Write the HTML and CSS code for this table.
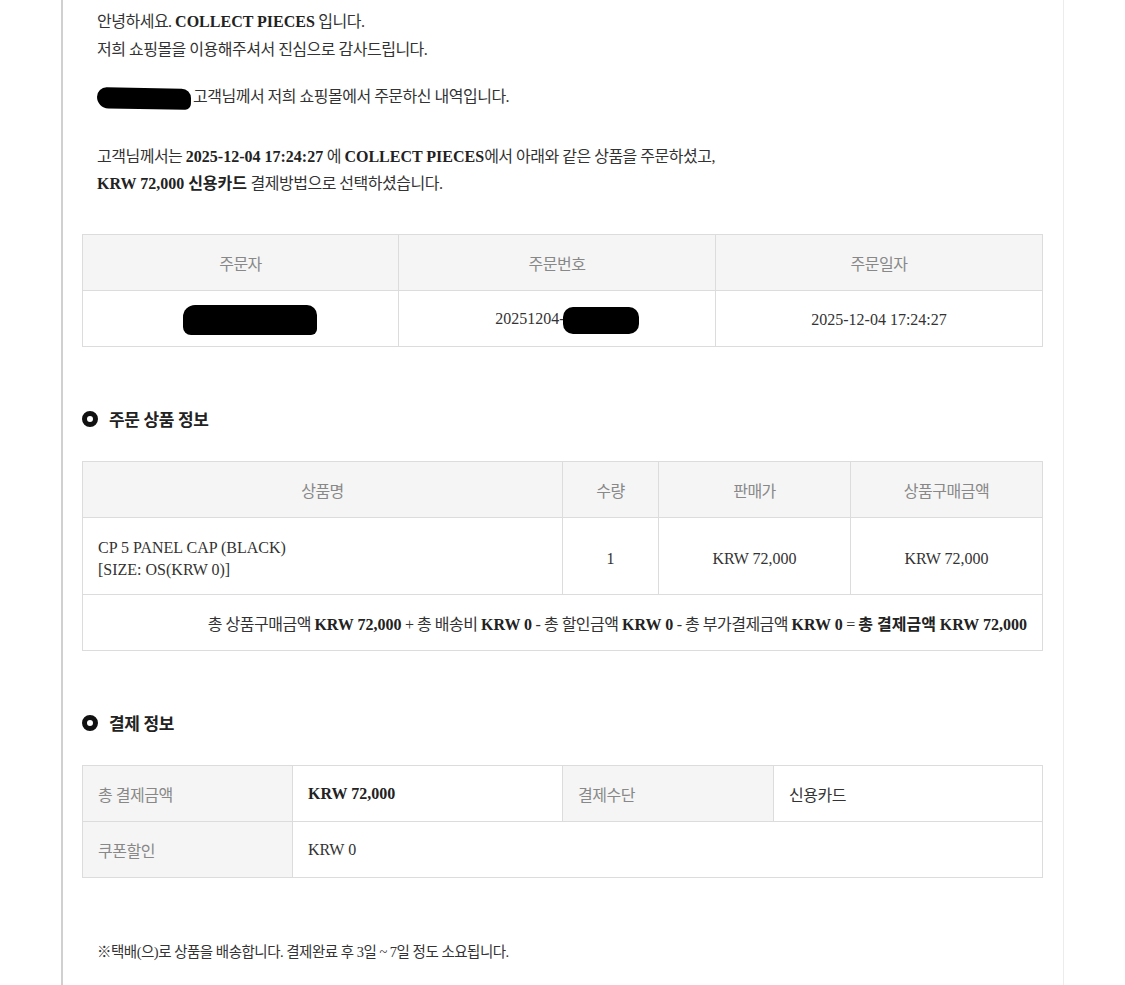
FILE: index.html
```html
<!DOCTYPE html>
<html lang="ko">
<head>
    <meta charset="UTF-8">
    <meta name="viewport" content="width=device-width, initial-scale=1.0">
    <title>주문 내역</title>
    <link rel="stylesheet" href="styles.css">
</head>
<body>
    <div class="mail">
        <div class="intro">
            <p>안녕하세요. <b>COLLECT PIECES</b> 입니다.<br>저희 쇼핑몰을 이용해주셔서 진심으로 감사드립니다.</p>
            <p class="name-line"><span class="blot blot-name"></span>고객님께서 저희 쇼핑몰에서 주문하신 내역입니다.</p>
            <p class="order-line">고객님께서는 <b>2025-12-04 17:24:27</b> 에 <b>COLLECT PIECES</b>에서 아래와 같은 상품을 주문하셨고,<br><b>KRW 72,000 신용카드</b> 결제방법으로 선택하셨습니다.</p>
        </div>

        <table class="grid summary">
            <tr>
                <th class="c1">주문자</th>
                <th class="c2">주문번호</th>
                <th>주문일자</th>
            </tr>
            <tr class="body-row">
                <td><span class="blot blot-buyer"></span></td>
                <td class="order-no">20251204-<span class="blot blot-num"></span></td>
                <td>2025-12-04 17:24:27</td>
            </tr>
        </table>

        <h3 class="section-title"><span class="ring"></span>주문 상품 정보</h3>

        <table class="grid items">
            <tr>
                <th class="i1">상품명</th>
                <th class="i2">수량</th>
                <th class="i3">판매가</th>
                <th>상품구매금액</th>
            </tr>
            <tr class="product-row">
                <td class="product">CP 5 PANEL CAP (BLACK)<br>[SIZE: OS(KRW 0)]</td>
                <td>1</td>
                <td>KRW 72,000</td>
                <td>KRW 72,000</td>
            </tr>
            <tr>
                <td colspan="4" class="total">총 상품구매금액 <b>KRW 72,000</b> + 총 배송비 <b>KRW 0</b> - 총 할인금액 <b>KRW 0</b> - 총 부가결제금액 <b>KRW 0</b> = <b>총 결제금액 KRW 72,000</b></td>
            </tr>
        </table>

        <h3 class="section-title"><span class="ring"></span>결제 정보</h3>

        <table class="grid pay">
            <tr>
                <th class="p1">총 결제금액</th>
                <td class="p2"><b>KRW 72,000</b></td>
                <th class="p3">결제수단</th>
                <td class="ko">신용카드</td>
            </tr>
            <tr>
                <th>쿠폰할인</th>
                <td colspan="3">KRW 0</td>
            </tr>
        </table>

        <p class="note">※택배(으)로 상품을 배송합니다. 결제완료 후 3일 ~ 7일 정도 소요됩니다.</p>
    </div>
</body>
</html>
```

FILE: styles.css
```css
body {
    margin: 0;
    padding: 0;
    background-color: #fff;
    font-family: "Liberation Serif", "Noto Sans CJK KR", serif;
    font-size: 16px;
    color: #333;
    letter-spacing: -0.5px;
}

.mail {
    width: 1003px;
    margin-left: 61px;
    border-left: 2px solid #d0d0d0;
    border-right: 1px solid #ececec;
    padding: 8px 20px 30px 19px;
    box-sizing: border-box;
    min-height: 985px;
}

.intro {
    padding-left: 15px;
}

.intro p {
    margin: 0;
    line-height: 28px;
}

.intro .name-line {
    margin-top: 19px;
}

.intro .order-line {
    margin-top: 32px;
    line-height: 27px;
}

b {
    color: #222;
    letter-spacing: 0;
}

.blot {
    display: inline-block;
    background-color: #000;
    vertical-align: middle;
    border-radius: 8px;
}

.blot-name {
    width: 94px;
    height: 21px;
    margin-right: 2px;
    border-radius: 10px 10px 6px 12px;
    transform: rotate(1deg);
}

.blot-buyer {
    width: 134px;
    height: 30px;
    margin-left: 18px;
    border-radius: 12px 10px 6px 8px;
}

.blot-num {
    width: 76px;
    height: 27px;
    margin-left: -2px;
    border-radius: 10px;
}

.grid {
    width: 961px;
    border-collapse: collapse;
    margin-top: 37px;
}

.grid th,
.grid td {
    border: 1px solid #dcdcdc;
    height: 55px;
    padding: 0 15px;
    font-weight: normal;
    text-align: center;
}

.grid td {
    letter-spacing: 0;
}

.grid th {
    background-color: #f5f5f5;
    color: #888;
}

.grid td.ko,
.grid td.total {
    letter-spacing: -0.5px;
}

.summary .body-row td {
    height: 52px;
    padding-top: 3px;
}

.summary .order-no {
    padding-left: 35px;
}

.summary .c1 { width: 285px; }
.summary .c2 { width: 286px; }

.items .i1 { width: 449px; }
.items .i2 { width: 65px; }
.items .i3 { width: 161px; }

.items .product-row td {
    height: 70px;
    padding-top: 6px;
}

.items .product {
    text-align: left;
    line-height: 22px;
}

.items .total {
    text-align: right;
}

.section-title {
    display: flex;
    align-items: center;
    margin: 60px 0 0;
    font-family: "Noto Sans CJK KR", sans-serif;
    font-size: 17px;
    font-weight: bold;
    color: #222;
    letter-spacing: -0.5px;
    line-height: 24px;
}

.ring {
    width: 6px;
    height: 6px;
    border: 5px solid #111;
    border-radius: 50%;
    margin-right: 11px;
}

.section-title + .grid {
    margin-top: 30px;
}

.pay th,
.pay td {
    text-align: left;
}

.pay .p1 { width: 179px; }
.pay .p2 { width: 239px; }
.pay .p3 { width: 180px; }

.note {
    margin: 62px 0 0 15px;
    font-size: 14.5px;
}
```
